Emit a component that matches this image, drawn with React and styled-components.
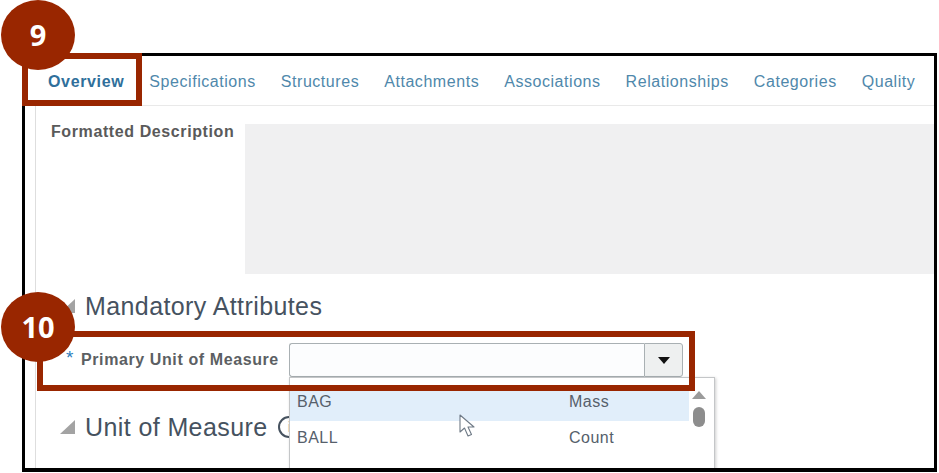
import React from 'react';
import styled, { createGlobalStyle } from 'styled-components';

const GlobalStyle = createGlobalStyle`
  html, body {
    margin: 0;
    padding: 0;
    background: #fff;
  }
`;

const TABS = ['Overview', 'Specifications', 'Structures', 'Attachments', 'Associations', 'Relationships', 'Categories', 'Quality'];

const OPTIONS = [
  ['BAG', 'Mass'],
  ['BALL', 'Count'],
];

const App = () => (
  <Page>
    <GlobalStyle />
    <Frame>
      <TabBar>
        {TABS.map((tab, i) => (
          <Tab key={tab} $active={i === 0}>{tab}</Tab>
        ))}
      </TabBar>
      <Body>
        <DescriptionRow>
          <BoldLabel>Formatted Description</BoldLabel>
          <DescriptionBox />
        </DescriptionRow>
        <SectionHeader>
          <Disclosure />
          <SectionTitle>Mandatory Attributes</SectionTitle>
        </SectionHeader>
        <FieldRow>
          <Star>*</Star>
          <FieldLabel>Primary Unit of Measure</FieldLabel>
          <Combo>
            <ComboInput />
            <ComboButton>
              <Caret />
            </ComboButton>
            <Dropdown>
              <Options>
                {OPTIONS.map(([code, type], i) => (
                  <Option key={code} $hover={i === 0}>
                    <OptionCode>{code}</OptionCode>
                    <span>{type}</span>
                  </Option>
                ))}
              </Options>
              <Scrollbar>
                <ScrollUp />
                <ScrollThumb />
              </Scrollbar>
              <Cursor viewBox="0 0 20 26">
                <path d="M2 1 L2 18 L6.5 14 L10 22 L13.5 20.5 L10 13 L16 13 Z" fill="#fff" stroke="#6f7a86" strokeWidth="1.1" strokeLinejoin="round" />
              </Cursor>
            </Dropdown>
          </Combo>
        </FieldRow>
        <SectionHeader $second>
          <Disclosure />
          <SectionTitle>Unit of Measure</SectionTitle>
          <InfoIcon>i</InfoIcon>
        </SectionHeader>
      </Body>
    </Frame>
    <StepBox $step={9} />
    <StepBox $step={10} />
    <StepBadge $step={9}>9</StepBadge>
    <StepBadge $step={10}>10</StepBadge>
  </Page>
);

const Page = styled.div`
  position: relative;
  width: 939px;
  height: 473px;
  overflow: hidden;
  background: #fff;
  font-family: 'Liberation Sans', Arial, sans-serif;
`;

const Frame = styled.div`
  box-sizing: border-box;
  position: absolute;
  left: 22px;
  top: 53px;
  width: 915px;
  height: 419px;
  border: 3px solid #000;
  border-bottom-width: 4px;
  overflow: hidden;
  background: #fff;
`;

const TabBar = styled.div`
  display: flex;
  align-items: center;
  gap: 25px;
  height: 46px;
  padding: 3px 0 0 23px;
  border-bottom: 1px solid #e9e9e9;
`;

const Tab = styled.div`
  font-size: 16px;
  font-weight: ${(p) => (p.$active ? 700 : 400)};
  letter-spacing: ${(p) => (p.$active ? '0.65px' : '0.55px')};
  color: ${(p) => (p.$active ? '#2f6f9b' : '#4f88ab')};
  white-space: nowrap;
`;

const Body = styled.div`
  margin-left: 10px;
  height: 100%;
  border-left: 1px solid #dedede;
  padding-top: 18px;
`;

const DescriptionRow = styled.div`
  display: flex;
  height: 150px;
  padding-left: 15px;
  align-items: flex-start;
`;

const BoldLabel = styled.div`
  width: 194px;
  font-size: 16px;
  font-weight: 700;
  letter-spacing: 0.6px;
  line-height: 16px;
  color: #5a5a5a;
  white-space: nowrap;
`;

const DescriptionBox = styled.div`
  width: 689px;
  height: 150px;
  background: #f0f0f1;
`;

const SectionHeader = styled.div`
  display: flex;
  align-items: center;
  height: 30px;
  margin-top: ${(p) => (p.$second ? '35px' : '17px')};
  padding-left: 24px;
`;

const Disclosure = styled.div`
  width: 0;
  height: 0;
  margin-right: 10px;
  border-style: solid;
  border-width: 0 0 14px 15px;
  border-color: transparent transparent #a3a3a3 transparent;
`;

const SectionTitle = styled.div`
  font-size: 25px;
  letter-spacing: 0.4px;
  color: #46525f;
  white-space: nowrap;
`;

const InfoIcon = styled.div`
  box-sizing: border-box;
  width: 22px;
  height: 22px;
  margin-left: 11px;
  border: 2px solid #46525f;
  border-radius: 50%;
  font-size: 14px;
  line-height: 18px;
  text-align: center;
  color: #46525f;
`;

const FieldRow = styled.div`
  display: flex;
  align-items: center;
  height: 34px;
  margin-top: 22px;
  padding-left: 30px;
`;

const Star = styled.span`
  width: 15px;
  align-self: flex-start;
  margin-top: 4px;
  font-size: 19px;
  line-height: 22px;
  color: #2f7fbd;
`;

const FieldLabel = styled.div`
  width: 208px;
  font-size: 16px;
  font-weight: 700;
  letter-spacing: 0.6px;
  color: #5c5f63;
  white-space: nowrap;
`;

const Combo = styled.div`
  position: relative;
  display: flex;
  width: 394px;
  height: 34px;
`;

const ComboInput = styled.div`
  box-sizing: border-box;
  flex: 1;
  background: #fcfdfe;
  border: 1px solid #a9b0b3;
  border-right: 0;
  border-radius: 3px 0 0 3px;
`;

const ComboButton = styled.div`
  box-sizing: border-box;
  display: flex;
  align-items: center;
  justify-content: center;
  width: 39px;
  background: #eef0f0;
  border: 1px solid #a9b0b3;
  border-radius: 0 3px 3px 0;
`;

const Caret = styled.div`
  width: 0;
  height: 0;
  border-style: solid;
  border-width: 7px 6px 0 6px;
  border-color: #111 transparent transparent transparent;
`;

const Dropdown = styled.div`
  position: absolute;
  left: 0;
  top: 34px;
  box-sizing: border-box;
  display: flex;
  width: 426px;
  height: 110px;
  padding-top: 7px;
  background: #fff;
  border: 1px solid #c4c6c8;
  box-shadow: 1px 1px 3px rgba(0, 0, 0, 0.2);
`;

const Options = styled.div`
  width: 399px;
`;

const Option = styled.div`
  box-sizing: border-box;
  display: flex;
  align-items: center;
  height: 36px;
  padding: 0 0 2px 7px;
  font-size: 16px;
  letter-spacing: 0.5px;
  color: #56606b;
  background: ${(p) => (p.$hover ? '#e1eefa' : 'transparent')};
`;

const OptionCode = styled.span`
  width: 272px;
`;

const Scrollbar = styled.div`
  display: flex;
  flex-direction: column;
  align-items: center;
  width: 20px;
  padding-top: 6px;
`;

const ScrollUp = styled.div`
  width: 0;
  height: 0;
  border-style: solid;
  border-width: 0 7px 8px 7px;
  border-color: transparent transparent #9b9b9b transparent;
`;

const ScrollThumb = styled.div`
  width: 12px;
  height: 20px;
  margin-top: 8px;
  border-radius: 6px;
  background: #8d8d8d;
`;

const Cursor = styled.svg`
  position: absolute;
  left: 168px;
  top: 36px;
  width: 20px;
  height: 26px;
`;

const StepBox = styled.div`
  position: absolute;
  box-sizing: border-box;
  border: 6px solid #992600;
  left: ${(p) => (p.$step === 9 ? '22px' : '37px')};
  top: ${(p) => (p.$step === 9 ? '53px' : '331px')};
  width: ${(p) => (p.$step === 9 ? '120px' : '658px')};
  height: ${(p) => (p.$step === 9 ? '53px' : '60px')};
`;

const StepBadge = styled.div`
  position: absolute;
  left: 1px;
  top: ${(p) => (p.$step === 9 ? '0' : '292px')};
  width: 74px;
  height: 70px;
  border-radius: 50%;
  background: #992600;
  color: #fff;
  font-family: 'Open Sans', sans-serif;
  font-size: 29px;
  font-weight: 700;
  line-height: 70px;
  text-align: center;
`;

export default App;
